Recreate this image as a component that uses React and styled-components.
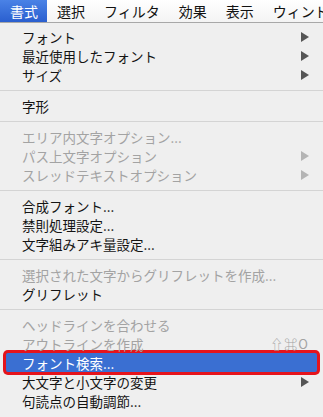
import styled, { createGlobalStyle } from "styled-components";

const GlobalStyle = createGlobalStyle`
  html, body {
    margin: 0;
    padding: 0;
    width: 323px;
    height: 417px;
    overflow: hidden;
    background: #efefef;
  }
  body {
    font-family: "Noto Sans CJK JP", "Noto Sans", sans-serif;
  }
`;

const menuBar = ["書式", "選択", "フィルタ", "効果", "表示", "ウィンドウ"];

const items = [
  { label: "フォント", sub: true },
  { label: "最近使用したフォント", sub: true },
  { label: "サイズ", sub: true },
  { sep: true },
  { label: "字形" },
  { sep: true },
  { label: "エリア内文字オプション...", disabled: true },
  { label: "パス上文字オプション", disabled: true, sub: true },
  { label: "スレッドテキストオプション", disabled: true, sub: true },
  { sep: true },
  { label: "合成フォント..." },
  { label: "禁則処理設定..." },
  { label: "文字組みアキ量設定..." },
  { sep: true },
  { label: "選択された文字からグリフレットを作成...", disabled: true },
  { label: "グリフレット" },
  { sep: true },
  { label: "ヘッドラインを合わせる", disabled: true },
  { label: "アウトラインを作成", disabled: true, shortcut: "⇧⌘O" },
  { label: "フォント検索...", active: true },
  { label: "大文字と小文字の変更", sub: true },
  { label: "句読点の自動調節..." },
];

function Arrow({ disabled }) {
  return (
    <svg width="8" height="10" viewBox="0 0 8 10">
      <path d="M0 0 L8 5 L0 10 Z" fill={disabled ? "#b4b4b4" : "#555"} />
    </svg>
  );
}

export default function App() {
  return (
    <>
      <GlobalStyle />
      <Bar>
        {menuBar.map((m, i) => (
          <BarItem key={m} $active={i === 0}>
            {m}
          </BarItem>
        ))}
      </Bar>
      <Menu>
        {items.map((it, i) =>
          it.sep ? (
            <Separator key={i} />
          ) : (
            <Row key={i} $disabled={it.disabled} $active={it.active}>
              <span>{it.label}</span>
              {it.sub && <Arrow disabled={it.disabled} />}
              {it.shortcut && <Shortcut>{it.shortcut}</Shortcut>}
            </Row>
          )
        )}
      </Menu>
    </>
  );
}

const Bar = styled.div`
  display: flex;
  height: 22px;
  background: linear-gradient(#ffffff, #f4f4f4);
  border-bottom: 1px solid #a8a8a8;
  white-space: nowrap;
  overflow: hidden;
`;

const BarItem = styled.div`
  display: flex;
  align-items: center;
  padding: 0 9px 0 10px;
  font-size: 14px;
  color: ${(p) => (p.$active ? "#fff" : "#111")};
  background: ${(p) => (p.$active ? "linear-gradient(#4a82e6, #2a5fcf)" : "transparent")};
  flex-shrink: 0;
`;

const Menu = styled.div`
  padding-top: 4px;
  background: #efefef;
`;

const Row = styled.div`
  display: flex;
  align-items: center;
  justify-content: space-between;
  height: 19px;
  padding: 0 14px 0 22px;
  font-size: 13.5px;
  white-space: nowrap;
  color: ${(p) => (p.$disabled ? "#a3a3a3" : p.$active ? "#fff" : "#141414")};
  background: ${(p) => (p.$active ? "#3a6fd2" : "transparent")};
  ${(p) =>
    p.$active &&
    `
    margin: 0 6px;
    padding-left: 16px;
    box-shadow: 0 0 0 3px #e5141c;
    border-radius: 2px;
  `}
`;

const Shortcut = styled.span`
  font-size: 13px;
  letter-spacing: 1px;
`;

const Separator = styled.div`
  height: 1px;
  margin: 6px 0 5px;
  background: #d4d4d4;
`;
